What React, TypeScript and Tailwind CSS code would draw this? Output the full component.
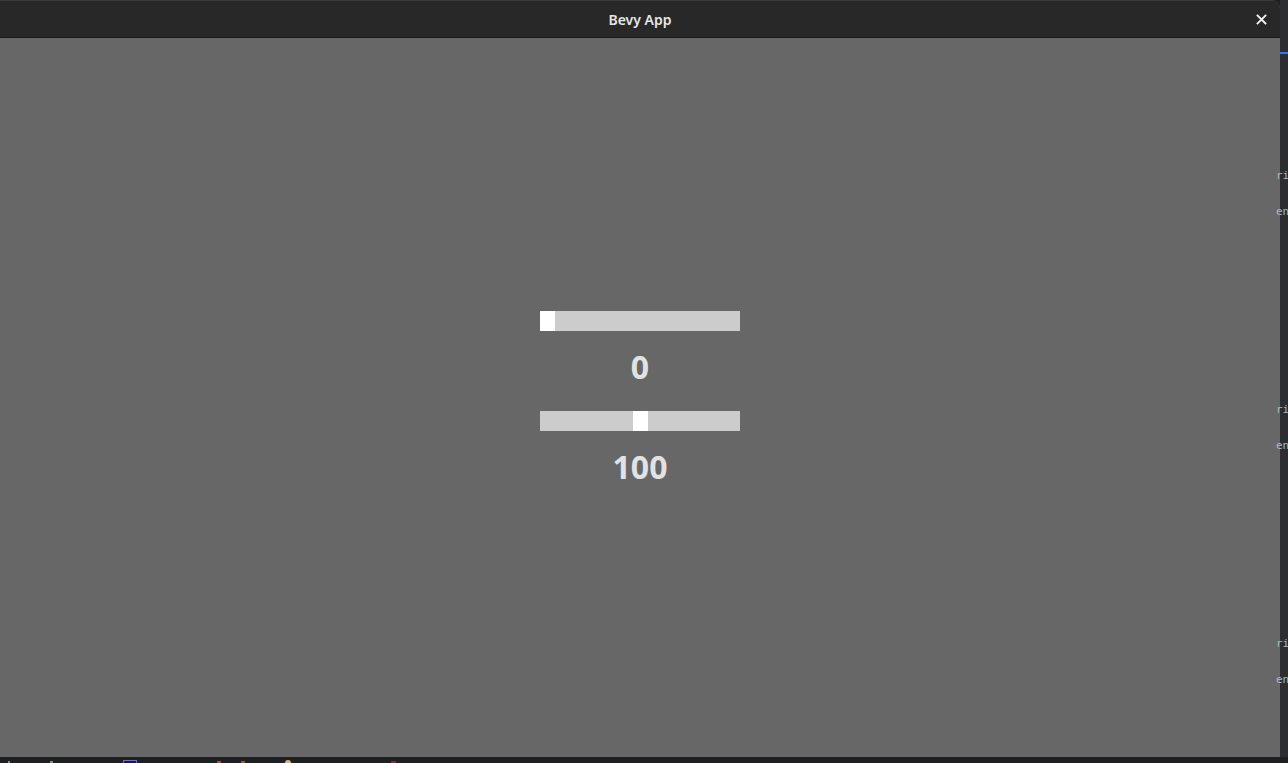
export default function App() {
    return (
        <div className="w-[1288px] h-[763px] flex flex-col bg-[#1e1f22] overflow-hidden">
            <div className="flex flex-1 min-h-0">
                <div className="w-[1280px] flex flex-col bg-[#676767] rounded-tr-[9px] overflow-hidden">
                    <div className="h-[38px] shrink-0 relative flex items-center justify-center bg-[#282828] border-b border-[#161616] border-t border-t-[#3a3a3a]">
                        <span className="text-[14px] font-semibold text-[#e6e6e6] [font-family:'Noto_Sans',sans-serif]">
                            Bevy App
                        </span>
                        <svg className="absolute right-[13px] top-[13px]" width="11" height="11" viewBox="0 0 11 11">
                            <path d="M1.5 1.5L9.5 9.5M9.5 1.5L1.5 9.5" stroke="#f2f2f2" strokeWidth="1.8" strokeLinecap="square" />
                        </svg>
                    </div>
                    <div className="flex-1 flex items-center justify-center">
                        <div className="pt-[2px] flex flex-col items-center [font-family:'Open_Sans',sans-serif]">
                            <SliderRow pos={0} />
                            <div className="mt-[16px] h-[40px] leading-[40px] text-[32px] font-bold text-[#e2e2e2]">0</div>
                            <div className="mt-[24px]">
                                <SliderRow pos={93} />
                            </div>
                            <div className="mt-[16px] h-[40px] leading-[40px] text-[32px] font-bold text-[#e2e2e2]">100</div>
                        </div>
                    </div>
                </div>
                <div className="w-[8px] bg-[#2b2d30] flex flex-col [font-family:'DejaVu_Sans_Mono',monospace] text-[11px] text-[#a9b7c6] leading-[12px]">
                    <div className="mt-[52px] h-[2px] bg-[#3574f0]" />
                    {[0, 1, 2].map((i) => (
                        <div key={i} className={i === 0 ? "mt-[116px]" : "mt-[186px]"}>
                            <div className="-ml-[4px] whitespace-nowrap">ri</div>
                            <div className="mt-[24px] -ml-[4px] whitespace-nowrap">en</div>
                        </div>
                    ))}
                </div>
            </div>
            <div className="h-[6px] shrink-0 bg-[#1e1f22] flex items-end gap-[40px] px-[8px]">
                <div className="w-[2px] h-[2px] bg-[#888]" />
                <div className="w-[3px] h-[2px] bg-[#888]" />
                <div className="ml-[30px] w-[14px] h-[3px] border border-b-0 border-[#6f6fd0]" />
                <div className="ml-[40px] w-[4px] h-[2px] bg-[#c0461c]" />
                <div className="-ml-[20px] w-[4px] h-[2px] bg-[#c0461c]" />
                <div className="w-[6px] h-[3px] rounded-t-full bg-[#d8b47a]" />
                <div className="ml-[60px] w-[5px] h-[2px] bg-[#a0202a]" />
            </div>
        </div>
    );
}

function SliderRow({ pos }: { pos: number }) {
    return (
        <div className="w-[200px] h-[20px] bg-[#cccccc] flex">
            <div className="shrink-0" style={{ width: pos }} />
            <div className="w-[15px] h-[20px] bg-white" />
        </div>
    );
}
